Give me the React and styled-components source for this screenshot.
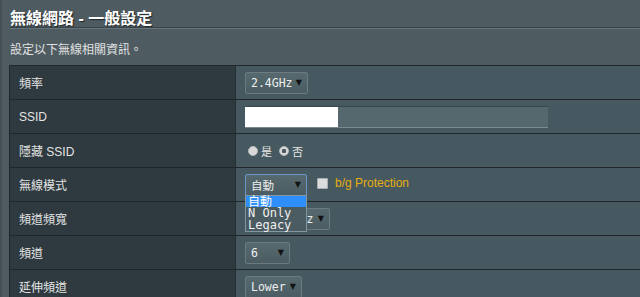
import React from 'react';
import styled, { createGlobalStyle } from 'styled-components';

const GlobalStyle = createGlobalStyle`
  html, body {
    margin: 0;
    padding: 0;
    background-color: #4e5b61;
    overflow: hidden;
  }
  body {
    font-family: Arial, "Liberation Sans", "Noto Sans CJK TC", sans-serif;
    color: #e6e6e6;
  }
`;

const Page = styled.div`
  width: 640px;
  height: 297px;
  padding-left: 7px;
  box-sizing: border-box;
  border-left: 2px solid #434f54;
  position: relative;
`;

const Title = styled.h2`
  margin: 0;
  padding: 5px 0 0 1px;
  height: 22px;
  font-size: 16px;
  font-weight: bold;
  color: #ffffff;
  text-shadow: 1px 1px 1px #1f2629;
  font-family: "Liberation Sans", "Noto Sans CJK TC", sans-serif;
`;

const Divider = styled.div`
  height: 1px;
  margin-left: 1px;
  background-color: #394449;
  border-bottom: 1px solid #66757a;
`;

const Desc = styled.p`
  margin: 0;
  padding: 11px 0 0 1px;
  height: 25px;
  font-size: 12px;
  color: #e2e2e2;
  font-family: "Liberation Sans", "Noto Sans CJK TC", sans-serif;
`;

const Table = styled.div`
  display: flex;
  flex-direction: column;
  border-top: 1px solid #1f272a;
  border-left: 1px solid #1f272a;
`;

const Row = styled.div`
  display: grid;
  grid-template-columns: 226px 1fr;
  height: 33px;
  border-bottom: 1px solid #1f272a;
`;

const Label = styled.div`
  display: flex;
  align-items: center;
  padding-left: 9px;
  background-color: #2e3a3f;
  border-right: 1px solid #263034;
  font-size: 12px;
  color: #e4e4e4;
  font-family: "Liberation Sans", "Noto Sans CJK TC", sans-serif;
`;

const Value = styled.div`
  display: flex;
  align-items: center;
  gap: 10px;
  padding-left: 9px;
  background-color: #475960;
  font-size: 12px;
`;

const SelectWrap = styled.div`
  position: relative;
`;

const Select = styled.div`
  box-sizing: border-box;
  width: ${({ w }) => w}px;
  height: 22px;
  display: flex;
  align-items: center;
  justify-content: space-between;
  padding: 0 5px 0 5px;
  border: 1px solid ${({ focused }) => (focused ? '#6f95c8' : '#6b7b80')};
  border-radius: 2px;
  background: linear-gradient(#56696f, #4b5d63);
  color: #eeeeee;
  font-size: 11.5px;
  font-family: "DejaVu Sans Mono", "Noto Sans CJK TC", monospace;
`;

const Arrow = styled.span`
  font-size: 8px;
  color: #111;
  font-family: "DejaVu Sans", sans-serif;
`;

const TextInput = styled.div`
  box-sizing: border-box;
  width: 303px;
  height: 22px;
  display: flex;
  background-color: #55686e;
  border-top: 1px solid #3a474c;
  border-bottom: 1px solid #7b8a8f;
`;

const Redacted = styled.div`
  width: 93px;
  background-color: #ffffff;
`;

const RadioGroup = styled.label`
  display: flex;
  align-items: center;
  gap: 3px;
  margin-right: 7px;
  font-family: "Noto Sans CJK TC", sans-serif;
  font-size: 11px;
  color: #e6e6e6;
`;

const Radio = styled.span`
  box-sizing: border-box;
  width: 10px;
  height: 10px;
  border-radius: 50%;
  background: ${({ checked }) =>
    checked ? 'radial-gradient(#4a5a60 0 2px, #d8d8d8 2.5px)' : '#d8d8d8'};
  border: 1px solid #b8bec0;
`;

const Radios = styled.div`
  display: flex;
  align-items: center;
  margin-left: 3px;
`;

const CheckLabel = styled.label`
  display: flex;
  align-items: center;
  gap: 7px;
  margin-top: -3px;
  color: #e6ae10;
  font-size: 12px;
  font-family: "Liberation Sans", sans-serif;
`;

const Checkbox = styled.span`
  box-sizing: border-box;
  width: 11px;
  height: 11px;
  background: #dcdcdc;
  border: 1px solid #a9b0b3;
  border-radius: 1px;
`;

const Menu = styled.div`
  position: absolute;
  top: 21px;
  left: 0;
  z-index: 2;
  box-sizing: border-box;
  width: 62px;
  padding-bottom: 1px;
  background-color: #4a5b61;
  border: 1px solid #8496a0;
  font-family: "DejaVu Sans Mono", "Noto Sans CJK TC", monospace;
  font-size: 12px;
  color: #f0f0f0;
`;

const MenuItem = styled.div`
  height: 11.5px;
  line-height: 12px;
  padding-left: 2px;
  background-color: ${({ active }) => (active ? '#2f8ffa' : 'transparent')};
  color: ${({ active }) => (active ? '#ffffff' : '#f0f0f0')};
`;

const Dropdown = ({ w, text, focused, children }) => (
  <SelectWrap>
    <Select w={w} focused={focused}>
      <span>{text}</span>
      <Arrow>▼</Arrow>
    </Select>
    {children}
  </SelectWrap>
);

export default function App() {
  return (
    <>
      <GlobalStyle />
      <Page>
        <Title>無線網路 - 一般設定</Title>
        <Divider />
        <Desc>設定以下無線相關資訊。</Desc>
        <Table>
          <Row>
            <Label>頻率</Label>
            <Value>
              <Dropdown w={63} text="2.4GHz" />
            </Value>
          </Row>
          <Row>
            <Label>SSID</Label>
            <Value>
              <TextInput>
                <Redacted />
              </TextInput>
            </Value>
          </Row>
          <Row>
            <Label>隱藏 SSID</Label>
            <Value>
              <Radios>
                <RadioGroup>
                  <Radio />是
                </RadioGroup>
                <RadioGroup>
                  <Radio checked />否
                </RadioGroup>
              </Radios>
            </Value>
          </Row>
          <Row>
            <Label>無線模式</Label>
            <Value>
              <Dropdown w={62} text="自動" focused>
                <Menu>
                  <MenuItem active>自動</MenuItem>
                  <MenuItem>N Only</MenuItem>
                  <MenuItem>Legacy</MenuItem>
                </Menu>
              </Dropdown>
              <CheckLabel>
                <Checkbox />
                b/g Protection
              </CheckLabel>
            </Value>
          </Row>
          <Row>
            <Label>頻道頻寬</Label>
            <Value>
              <Dropdown w={85} text="20/40 MHz" />
            </Value>
          </Row>
          <Row>
            <Label>頻道</Label>
            <Value>
              <Dropdown w={45} text="6" />
            </Value>
          </Row>
          <Row>
            <Label>延伸頻道</Label>
            <Value>
              <Dropdown w={57} text="Lower" />
            </Value>
          </Row>
        </Table>
      </Page>
    </>
  );
}
